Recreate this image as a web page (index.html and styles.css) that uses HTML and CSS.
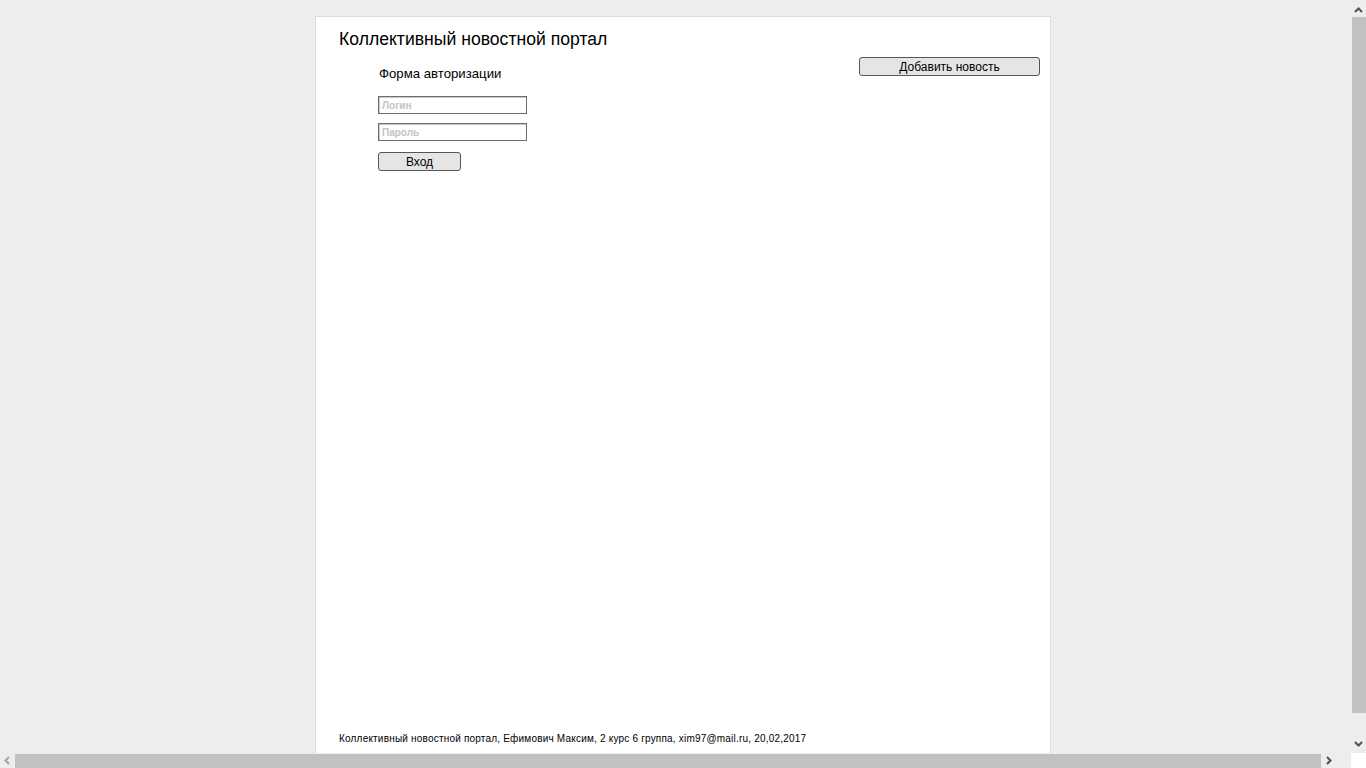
FILE: index.html
```html
<!DOCTYPE html>
<html lang="ru">
<head>
<meta charset="utf-8">
<title>Коллективный новостной портал</title>
<link rel="stylesheet" href="styles.css">
</head>
<body>
<div class="screen">
  <div class="top">
    <div class="viewport">
      <div class="card">
        <h1 class="title">Коллективный новостной портал</h1>
        <div class="row">
          <form class="auth">
            <div class="auth-title">Форма авторизации</div>
            <input class="field" type="text" placeholder="Логин">
            <input class="field field2" type="password" placeholder="Пароль">
            <button class="btn btn-login" type="button">Вход</button>
          </form>
          <button class="btn btn-add" type="button">Добавить новость</button>
        </div>
        <div class="footer">Коллективный новостной портал, Ефимович Максим, 2 курс 6 группа, xim97@mail.ru, 20,02,2017</div>
      </div>
    </div>
    <div class="vscroll">
      <div class="arrow">
        <svg width="15" height="17" viewBox="0 0 15 17"><polyline points="4,12 7.5,8.5 11,12" fill="none" stroke="#505050" stroke-width="2"/></svg>
      </div>
      <div class="vthumb"></div>
      <div class="vrest"></div>
      <div class="arrow">
        <svg width="15" height="17" viewBox="0 0 15 17"><polyline points="4,6 7.5,9.5 11,6" fill="none" stroke="#505050" stroke-width="2"/></svg>
      </div>
    </div>
  </div>
  <div class="hscroll">
    <div class="harrow">
      <svg width="15" height="15" viewBox="0 0 15 15"><polyline points="9,4 5.5,7.5 9,11" fill="none" stroke="#a3a3a3" stroke-width="2"/></svg>
    </div>
    <div class="hthumb"></div>
    <div class="harrow">
      <svg width="15" height="15" viewBox="0 0 15 15"><polyline points="6,4 9.5,7.5 6,11" fill="none" stroke="#505050" stroke-width="2"/></svg>
    </div>
    <div class="corner"></div>
  </div>
</div>
</body>
</html>
```
FILE: styles.css
```css
* { box-sizing: border-box; }
html, body { margin: 0; padding: 0; height: 100%; overflow: hidden; }
body { font-family: Arial, "Liberation Sans", sans-serif; background: #ededed; color: #000; }
.screen { display: flex; flex-direction: column; width: 1366px; height: 768px; }
.top { display: flex; height: 753px; }
.viewport { width: 1351px; height: 753px; overflow: hidden; padding-top: 16px; }
.card {
  margin-left: 315px;
  width: 736px;
  height: 745px;
  background: #fff;
  border: 1px solid #dcdcdc;
  display: flex;
  flex-direction: column;
  padding: 11px 10px 15px 23px;
}
.title { margin: 0; font-size: 17.6px; font-weight: normal; line-height: 22px; }
.row { display: flex; justify-content: space-between; align-items: flex-start; margin-top: 7px; }
.auth { margin: 0 0 0 39px; padding-top: 9px; display: flex; flex-direction: column; align-items: flex-start; }
.auth-title { font-size: 13.2px; line-height: 16px; margin-left: 1px; }
.field {
  margin-top: 14px;
  width: 149px; height: 18px;
  border: 1px solid #6e6e6e;
  box-shadow: inset 1px 1px 0 #c8c8c8;
  padding: 0 3px;
  font-family: Arial, "Liberation Sans", sans-serif;
  font-size: 10px;
  font-weight: bold;
  outline: none;
}
.field::placeholder { color: #c3c3c3; }
.field2 { margin-top: 9px; }
.btn {
  font-family: Arial, "Liberation Sans", sans-serif;
  font-size: 12px;
  line-height: 14px;
  background: #e5e5e5;
  border: 1px solid #555;
  border-radius: 3px;
  color: #000;
  padding: 0;
  height: 19px;
}
.btn-login { margin-top: 11px; width: 83px; }
.btn-add { width: 181px; }
.footer { margin-top: auto; font-size: 10px; line-height: 12px; letter-spacing: 0.2px; }
.vscroll { width: 15px; height: 753px; display: flex; flex-direction: column; background: #ededed; }
.arrow { height: 17px; display: flex; }
.vthumb { height: 696px; background: #c1c1c1; margin-left: 1px; }
.vrest { flex: 1; }
.hscroll { display: flex; height: 15px; background: #ededed; }
.harrow { width: 15px; height: 15px; display: flex; }
.hthumb { width: 1306px; background: #c1c1c1; margin-top: 1px; }
.corner { width: 15px; margin-left: auto; background: #fff; }
```
